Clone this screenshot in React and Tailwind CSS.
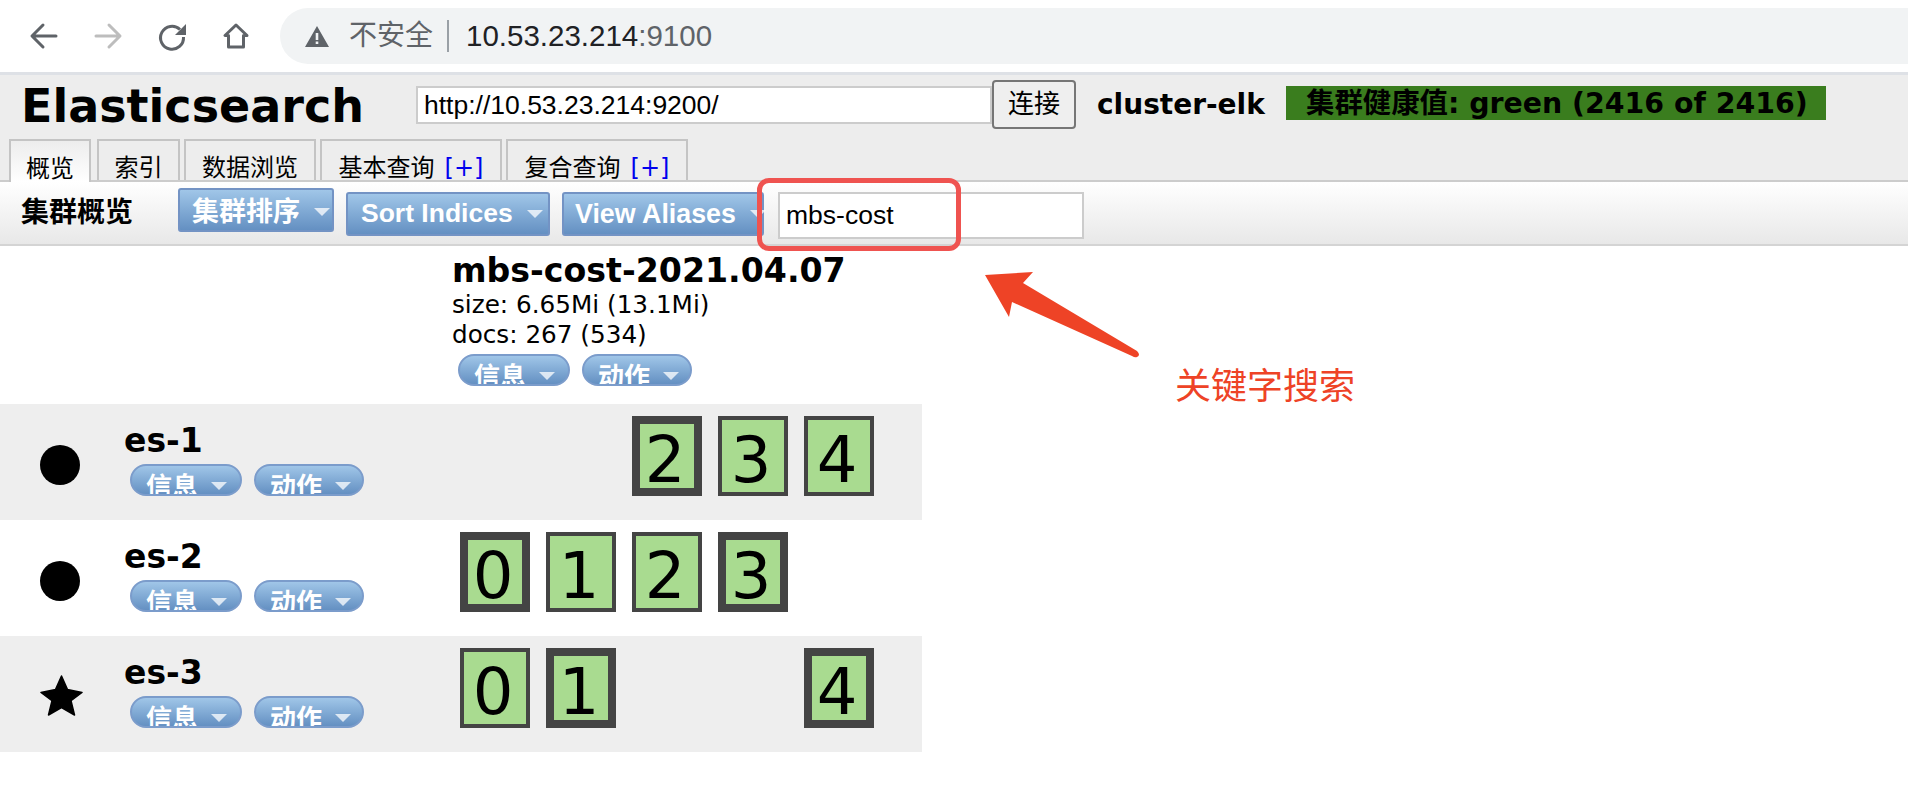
import React from 'react';

const nodes = [
  { name: 'es-1', icon: 'dot', bg: 'bg-[#eeeeee]', shards: [null, null, { n: 2, primary: true }, { n: 3 }, { n: 4 }] },
  { name: 'es-2', icon: 'dot', bg: 'bg-white', shards: [{ n: 0, primary: true }, { n: 1 }, { n: 2 }, { n: 3, primary: true }, null] },
  { name: 'es-3', icon: 'star', bg: 'bg-[#eeeeee]', shards: [{ n: 0 }, { n: 1, primary: true }, null, null, { n: 4, primary: true }] },
];

const Caret = () => <span className="inline-block w-0 h-0 border-x-[8px] border-x-transparent border-t-[8px] border-t-white/75" />;

// small pill menu, the text is cut off at the bottom like in the real page
const Pill = ({ label, width }) => (
  <div
    className={`h-8 ${width} rounded-full overflow-hidden border-2 border-[#7b9ccb] bg-gradient-to-b from-[#a0c6e8] to-[#6490c2] flex pl-[14px] gap-[13px] pt-[3px] text-white font-bold text-[26px] leading-[36px] font-['DejaVu_Sans','Noto_Sans_CJK_SC',sans-serif]`}
  >
    <span className="whitespace-nowrap">{label}</span>
    <span className="mt-[13px] leading-none flex"><Caret /></span>
  </div>
);

const Menus = () => (
  <div className="flex gap-3">
    <Pill label="信息" width="w-[112px]" />
    <Pill label="动作" width="w-[110px]" />
  </div>
);

const ToolButton = ({ label, className }) => (
  <div
    className={`h-11 rounded-[3px] border-2 border-[#7393c4] bg-gradient-to-b from-[#a0c6e8] to-[#6490c2] flex items-center gap-[14px] text-white font-bold whitespace-nowrap ${className}`}
  >
    {label}
    <Caret />
  </div>
);

const Tab = ({ children, active, width }) => (
  <div
    className={`${width} border-2 border-[#c4c4c4] flex items-center justify-center pt-[14px] text-[24px] leading-6 whitespace-nowrap ${
      active ? 'h-[43px] -mb-[2px] border-b-0 bg-gradient-to-b from-[#ededed] to-white z-10' : 'h-[41px] border-b-0'
    }`}
  >
    {children}
  </div>
);

const Plus = () => <span className="ml-[10px] text-[#0000ee] font-['DejaVu_Sans',sans-serif]">[+]</span>;

const Shard = ({ shard }) => {
  if (!shard) return <div className="w-[70px] h-20" />;
  return (
    <div
      className={`w-[70px] h-20 border-[#444444] bg-[#a9db90] flex items-center justify-center pt-[8px] pr-1 text-[64px] leading-none font-['DejaVu_Sans',sans-serif] ${
        shard.primary ? 'border-8' : 'border-4'
      }`}
    >
      {shard.n}
    </div>
  );
};

const App = () => {
  return (
    <div className="relative w-[1908px] h-[810px] overflow-hidden bg-white text-black font-['Liberation_Sans','Noto_Sans_CJK_SC',sans-serif]">
      {/* browser bar */}
      <div className="h-[75px] border-b-[3px] border-[#dee1e6] flex items-center">
        <div className="flex items-center gap-8 pl-7 w-[280px] shrink-0">
          <svg width="32" height="32" viewBox="0 0 32 32" fill="none" stroke="#5f6368" strokeWidth="3" strokeLinecap="round" strokeLinejoin="round">
            <path d="M28 16H5M15 5 4 16l11 11" />
          </svg>
          <svg width="32" height="32" viewBox="0 0 32 32" fill="none" stroke="#bdbdbd" strokeWidth="3" strokeLinecap="round" strokeLinejoin="round">
            <path d="M4 16h23M17 5l11 11-11 11" />
          </svg>
          <svg width="32" height="32" viewBox="0 0 32 32" fill="none" stroke="#5f6368" strokeWidth="3">
            <path d="M24 9.500A11.500 11.500 0 1 0 27.500 17" />
            <path d="M30 4v11H19z" fill="#5f6368" stroke="none" />
          </svg>
          <svg width="32" height="32" viewBox="0 0 32 32" fill="none" stroke="#5f6368" strokeWidth="3" strokeLinejoin="round">
            <path d="M16 5 5 15.500h3.500V27h15V15.500H27z" />
          </svg>
        </div>
        <div className="flex-1 h-14 rounded-l-[28px] bg-[#f1f3f4] flex items-center pl-[25px]">
          <svg width="24" height="21" viewBox="0 0 24 21" fill="#5f6368">
            <path d="M12 0 24 21H0zM10.700 7v7h2.600V7zm0 8.500V18h2.600v-2.500z" fillRule="evenodd" />
          </svg>
          <span className="ml-5 text-[28px] text-[#5f6368]">不安全</span>
          <span className="ml-[14px] w-[2px] h-8 bg-[#9aa0a6]" />
          <span className="ml-[17px] text-[29.500px] text-[#202124]">10.53.23.214<span className="text-[#5f6368]">:9100</span></span>
        </div>
      </div>

      {/* header */}
      <div className="h-[107px] bg-[#ededed] border-b-2 border-[#cccccc] flex flex-col">
        <div className="h-[65px] flex items-start">
          <div className="w-[416px] pl-[21px] text-[46px] leading-[62px] font-bold font-['DejaVu_Sans',sans-serif]">Elasticsearch</div>
          <div className="mt-[11px] w-[576px] h-[38px] bg-white border-2 border-[#cccccc] pl-[6px] text-[26.500px] leading-[34px]">http://10.53.23.214:9200/</div>
          <div className="mt-[5px] w-[84px] h-[49px] border-2 border-[#767676] rounded-[4px] bg-[#efefef] flex items-center justify-center text-[26px]">连接</div>
          <div className="ml-[21px] mt-[12px] w-[189px] text-[28px] leading-9 font-bold font-['DejaVu_Sans',sans-serif]">cluster-elk</div>
          <div className="mt-[11px] w-[540px] h-[34px] bg-[#3a7d1e] flex items-center pl-5 pt-[2px] text-[28.400px] font-bold font-['DejaVu_Sans','Noto_Sans_CJK_SC',sans-serif] whitespace-nowrap">
            集群健康值: green (2416 of 2416)
          </div>
        </div>
        <div className="flex items-end gap-1 pl-[9px] mt-auto">
          <div className="mr-[2px] flex items-end"><Tab active width="w-[82px]">概览</Tab></div>
          <Tab width="w-[83px]">索引</Tab>
          <Tab width="w-[132px]">数据浏览</Tab>
          <Tab width="w-[182px]">基本查询<Plus /></Tab>
          <Tab width="w-[182px]">复合查询<Plus /></Tab>
        </div>
      </div>

      {/* toolbar */}
      <div className="h-16 border-b-2 border-[#d4d4d4] bg-gradient-to-b from-white to-[#e8e8e8] flex items-start">
        <div className="w-[178px] pl-[21px] pt-[13px] text-[28px] leading-9 font-bold font-['DejaVu_Sans','Noto_Sans_CJK_SC',sans-serif]">集群概览</div>
        <ToolButton label="集群排序" className="mt-[6px] w-[156px] pl-3 pt-1 text-[27px]" />
        <ToolButton label="Sort Indices" className="mt-[10px] ml-3 w-[204px] pl-[13px] text-[26.500px]" />
        <ToolButton label="View Aliases" className="mt-[10px] ml-3 w-[202px] pl-[11px] text-[26.800px]" />
        <div className="mt-[10px] ml-[14px] w-[306px] h-[47px] bg-white border-2 border-[#cccccc] pl-[6px] text-[26.500px] leading-[43px]">mbs-cost</div>
      </div>

      {/* index header */}
      <div className="h-[158px] pl-[452px] font-['DejaVu_Sans','Noto_Sans_CJK_SC',sans-serif]">
        <div className="pt-[5px] text-[33.200px] leading-10 font-bold whitespace-nowrap">mbs-cost-2021.04.07</div>
        <div className="text-[24.700px] leading-[30px] whitespace-nowrap -mt-[1px]">size: 6.65Mi (13.1Mi)</div>
        <div className="text-[24.700px] leading-[30px] whitespace-nowrap">docs: 267 (534)</div>
        <div className="pl-[6px] mt-[4px]"><Menus /></div>
      </div>

      {/* nodes */}
      {nodes.map((node) => (
        <div key={node.name} className={`h-[116px] w-[922px] flex ${node.bg}`}>
          <div className="w-[125px] pl-10 pt-[41px] shrink-0">
            {node.icon === 'dot' ? (
              <div className="w-10 h-10 rounded-full bg-black" />
            ) : (
              <svg width="44" height="42" viewBox="0 0 44 42" fill="black" stroke="black" strokeWidth="1.500" strokeLinejoin="round" className="-mt-[2px]">
                <path d="M21.500 1 27.400 14.400 42 17.500 31 25.600 34.500 40 21.500 32.500 8.500 40 12 25.600 1 17.500 15.600 14.400z" />
              </svg>
            )}
          </div>
          <div className="w-[335px] shrink-0 font-['DejaVu_Sans',sans-serif]">
            <div className="pt-[18px] -ml-[1px] text-[33px] leading-[38px] font-bold">{node.name}</div>
            <div className="pl-[5px] mt-[4px]"><Menus /></div>
          </div>
          <div className="flex gap-4 pt-3">
            {node.shards.map((shard, i) => (
              <Shard key={i} shard={shard} />
            ))}
          </div>
        </div>
      ))}

      {/* annotation over the page */}
      <div className="absolute left-[757px] top-[178px] w-[204px] h-[73px] border-[5px] border-[#ef5350] rounded-[12px]" />
      <svg className="absolute left-0 top-0" width="1908" height="810" fill="#ee4326">
        <path d="M985 275 1033 272 1023 283 1137 351Q1141 355 1137 357 1135 358 1132 356L1012 302 1009 317z" />
      </svg>
      <div className="absolute left-[1175px] top-[360px] text-[36px] leading-[46px] text-[#ee4326] font-['Noto_Sans_CJK_SC',sans-serif] whitespace-nowrap">关键字搜索</div>
    </div>
  );
};

export default App;
